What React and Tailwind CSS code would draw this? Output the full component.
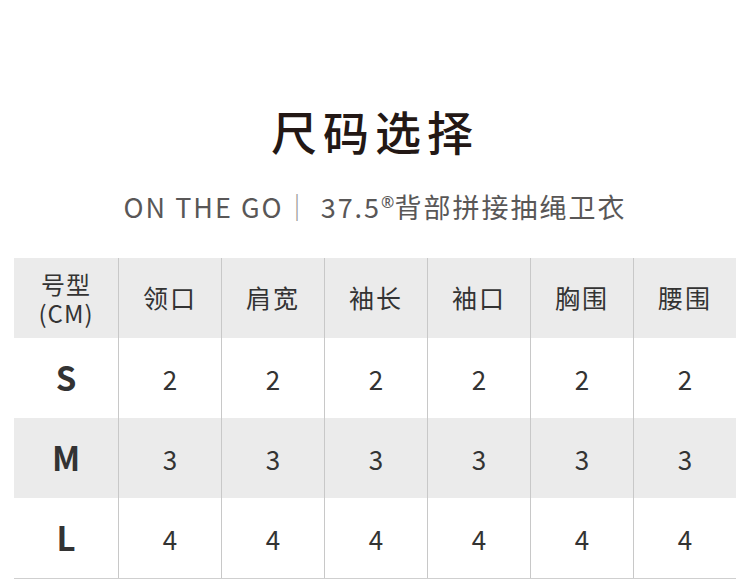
import React from 'react';

const heads = ['领口', '肩宽', '袖长', '袖口', '胸围', '腰围'];
const rows = [
  { size: 'S', v: 2, bg: 'bg-white' },
  { size: 'M', v: 3, bg: 'bg-[#ebebeb]' },
  { size: 'L', v: 4, bg: 'bg-white' },
];

const font = { fontFamily: '"Noto Sans CJK SC", "Noto Sans", sans-serif' };

export default function App() {
  return (
    <div className="w-[750px] h-[579px] bg-white overflow-hidden" style={font}>
      {/* title */}
      <div className="pt-[100px] text-center">
        <h1 className="text-[46px] leading-[60px] tracking-[6px] text-[#231815] font-medium">尺码选择</h1>
        <p className="mt-[29px] text-[27px] leading-[36px] tracking-[2px] text-[#595757]">
          ON THE GO<span className="text-[#9a9a9a]">｜</span> 37.5
          <sup className="font-['Noto_Sans',sans-serif] text-[16px] -top-[10px] tracking-normal">®</sup>背部拼接抽绳卫衣
        </p>
      </div>

      {/* table */}
      <div className="mt-[33px] ml-[14px] w-[722px] border-b border-[#cfcfcf]">
        <div className="grid grid-cols-[104px_repeat(6,103px)] h-[80px] bg-[#ebebeb] text-[#333]">
          <div className="flex flex-col items-center justify-center text-[24px] leading-[29px] tracking-[1px]">
            <span>号型</span>
            <span>(CM)</span>
          </div>
          {heads.map((h) => (
            <div key={h} className="flex items-center justify-center border-l border-[#c8c8c8] text-[25px] tracking-[2px]">
              {h}
            </div>
          ))}
        </div>
        {rows.map((r) => (
          <div key={r.size} className={`grid grid-cols-[104px_repeat(6,103px)] h-[80px] ${r.bg} text-[#333]`}>
            <div className="flex items-center justify-center text-[33px] font-bold">{r.size}</div>
            {heads.map((h) => (
              <div key={h} className="flex items-center justify-center border-l border-[#c8c8c8] text-[26px]">
                {r.v}
              </div>
            ))}
          </div>
        ))}
      </div>
    </div>
  );
}
